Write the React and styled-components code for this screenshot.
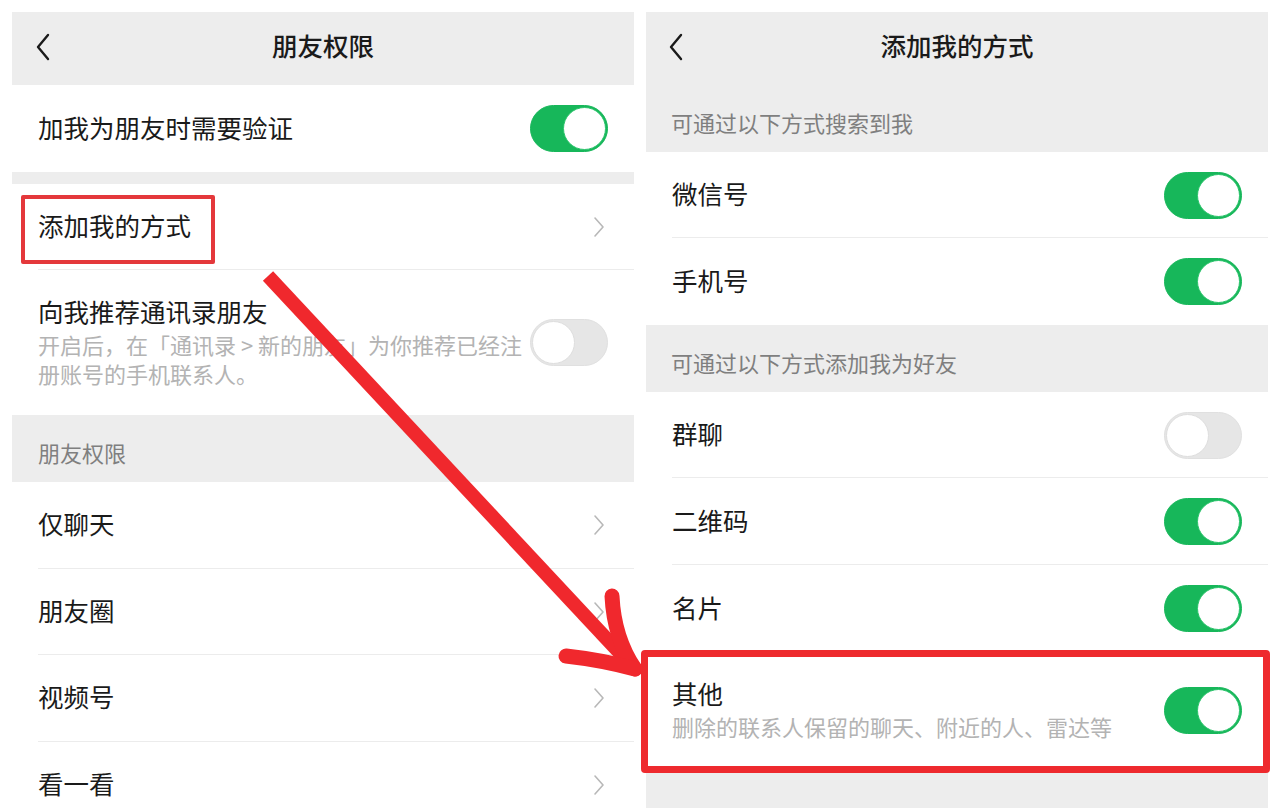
import React from 'react';
import styled, { createGlobalStyle } from 'styled-components';

const GlobalStyle = createGlobalStyle`
  html, body {
    margin: 0;
    padding: 0;
    background: #ffffff;
  }
  body {
    font-family: "Noto Sans CJK SC", "Noto Sans", sans-serif;
    color: #1a1a1a;
  }
`;

const Page = styled.div`
  position: relative;
  display: flex;
  gap: 12px;
  padding: 12px 12px 0;
  height: 808px;
  box-sizing: border-box;
  overflow: hidden;
  background: #ffffff;
`;

const Panel = styled.div`
  flex: 1;
  display: flex;
  flex-direction: column;
  background: ${p => p.$fill || '#ffffff'};
  min-width: 0;
`;

const Header = styled.div`
  flex: none;
  height: 73px;
  display: grid;
  grid-template-columns: 1fr auto 1fr;
  align-items: center;
  background: #ededed;
`;

const BackButton = styled.div`
  display: flex;
  align-items: center;
  padding-left: ${p => p.$left || 23}px;
  height: 100%;
`;

const Title = styled.div`
  font-size: 25.5px;
  font-weight: 500;
  line-height: 32px;
  color: #1a1a1a;
  margin-top: -7px;
`;

const SectionHeader = styled.div`
  flex: none;
  height: 67px;
  box-sizing: border-box;
  padding: 25px ${p => p.$pad || 26}px 0;
  font-size: 22px;
  line-height: 24px;
  color: #7f7f7f;
  background: #ededed;
`;

const Gap = styled.div`
  flex: none;
  height: 12px;
  background: #ededed;
`;

const Row = styled.div`
  position: relative;
  flex: none;
  display: flex;
  align-items: center;
  justify-content: space-between;
  height: ${p => p.$h || 86.5}px;
  box-sizing: border-box;
  padding: 0 26px;
  background: #ffffff;

  ${p => p.$line && `
    &::after {
      content: '';
      position: absolute;
      left: 26px;
      right: 0;
      bottom: 0;
      height: 1px;
      background: #ececec;
    }
  `}

  ${p => p.$boxed && `
    &::before {
      content: '';
      position: absolute;
      left: -5px;
      right: -2px;
      top: -2px;
      bottom: -5px;
      border: 7px solid #ee2a2e;
      border-radius: 4px;
      z-index: 2;
      pointer-events: none;
    }
  `}
`;

const TextBlock = styled.div`
  display: flex;
  flex-direction: column;
  padding-top: ${p => p.$top || 0}px;
`;

const Label = styled.span`
  position: relative;
  top: -2px;
  font-size: 25.5px;
  line-height: 32px;
  color: #1a1a1a;

  ${p => p.$boxed && `
    &::after {
      content: '';
      position: absolute;
      left: -17px;
      right: -24px;
      top: -14px;
      bottom: -23px;
      border: 4px solid #e4383b;
      border-radius: 2px;
      pointer-events: none;
    }
  `}
`;

const Hint = styled.span`
  font-size: 22px;
  line-height: 29px;
  color: #b3b3b3;
  white-space: pre-line;
  margin-top: 1px;
`;

const Track = styled.div`
  position: relative;
  flex: none;
  width: 78px;
  height: 47px;
  border-radius: 24px;
  box-sizing: border-box;
  background: ${p => (p.$on ? '#17b75a' : '#e6e6e6')};
  border: 1px solid ${p => (p.$on ? '#17b75a' : '#e0e0e0')};
`;

const Knob = styled.div`
  position: absolute;
  top: 1px;
  ${p => (p.$on ? 'right: 1px;' : 'left: 1px;')}
  width: 43px;
  height: 43px;
  border-radius: 50%;
  background: #ffffff;
  box-sizing: border-box;
  border: 1px solid ${p => (p.$on ? '#2cc46c' : '#dedede')};
`;

const Overlay = styled.svg`
  position: absolute;
  left: 0;
  top: 0;
  width: 1280px;
  height: 808px;
  pointer-events: none;
  z-index: 5;
`;

const Switch = ({ on }) => (
  <Track $on={on}>
    <Knob $on={on} />
  </Track>
);

const Chevron = () => (
  <svg width="12" height="22" viewBox="0 0 12 22" style={{ marginRight: 3 }}>
    <path d="M2 2 L10 11 L2 20" fill="none" stroke="#b8b8b8" strokeWidth="1.6" strokeLinecap="round" strokeLinejoin="round" />
  </svg>
);

const Back = () => (
  <svg width="16" height="28" viewBox="0 0 16 28" style={{ marginTop: -4 }}>
    <path d="M13 2 L3 14 L13 26" fill="none" stroke="#1a1a1a" strokeWidth="2.4" strokeLinecap="round" strokeLinejoin="round" />
  </svg>
);

const leftList = [
  { label: '仅聊天', line: true },
  { label: '朋友圈', line: true },
  { label: '视频号', line: true },
  { label: '看一看', line: false },
];

export default function App() {
  return (
    <>
      <GlobalStyle />
      <Page>
        <Panel>
          <Header>
            <BackButton><Back /></BackButton>
            <Title>朋友权限</Title>
            <div />
          </Header>
          <Row $h={87}>
            <Label>加我为朋友时需要验证</Label>
            <Switch on />
          </Row>
          <Gap />
          <Row $h={86} $line>
            <Label $boxed>添加我的方式</Label>
            <Chevron />
          </Row>
          <Row $h={145}>
            <TextBlock>
              <Label>向我推荐通讯录朋友</Label>
              <Hint>{'开启后，在「通讯录 > 新的朋友」为你推荐已经注\n册账号的手机联系人。'}</Hint>
            </TextBlock>
            <Switch on={false} />
          </Row>
          <SectionHeader>朋友权限</SectionHeader>
          {leftList.map(item => (
            <Row key={item.label} $line={item.line}>
              <Label>{item.label}</Label>
              <Chevron />
            </Row>
          ))}
        </Panel>

        <Panel $fill="#ededed">
          <Header>
            <BackButton $left={22}><Back /></BackButton>
            <Title>添加我的方式</Title>
            <div />
          </Header>
          <SectionHeader $pad={25}>可通过以下方式搜索到我</SectionHeader>
          <Row $h={86} $line>
            <Label>微信号</Label>
            <Switch on />
          </Row>
          <Row $h={87}>
            <Label>手机号</Label>
            <Switch on />
          </Row>
          <SectionHeader $pad={25}>可通过以下方式添加我为好友</SectionHeader>
          <Row $h={86} $line>
            <Label>群聊</Label>
            <Switch on={false} />
          </Row>
          <Row $h={87} $line>
            <Label>二维码</Label>
            <Switch on />
          </Row>
          <Row $h={87}>
            <Label>名片</Label>
            <Switch on />
          </Row>
          <Row $h={116} $boxed>
            <TextBlock $top={-14}>
              <Label>其他</Label>
              <Hint>删除的联系人保留的聊天、附近的人、雷达等</Hint>
            </TextBlock>
            <Switch on />
          </Row>
        </Panel>

        <Overlay viewBox="0 0 1280 808">
          <path d="M268 276 L632 666" stroke="#f0282d" strokeWidth="14" fill="none" />
          <path d="M612 596 Q614 638 635 669" stroke="#f0282d" strokeWidth="15" fill="none" strokeLinecap="round" />
          <path d="M566 656 Q602 660 635 669" stroke="#f0282d" strokeWidth="15" fill="none" strokeLinecap="round" />
        </Overlay>
      </Page>
    </>
  );
}
